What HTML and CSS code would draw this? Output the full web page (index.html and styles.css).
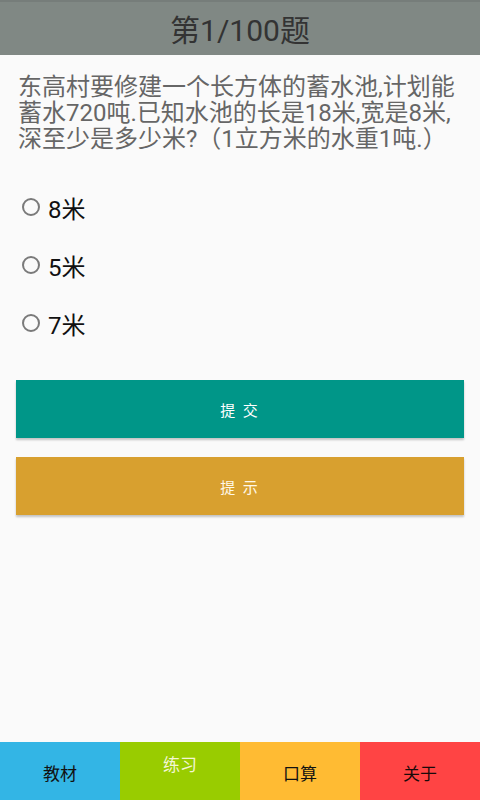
FILE: index.html
```html
<!DOCTYPE html>
<html lang="zh-CN">
<head>
<meta charset="utf-8">
<title>第1/100题</title>
<link rel="stylesheet" href="styles.css">
</head>
<body>
<div class="app">
  <header class="title-bar">第1/100题</header>
  <main class="content">
    <p class="question">东高村要修建一个长方体的蓄水池,计划能蓄水720吨.已知水池的长是18米,宽是8米,深至少是多少米?（1立方米的水重1吨.）</p>
    <ul class="options">
      <li class="option"><span class="radio"></span><span class="opt-text">8米</span></li>
      <li class="option"><span class="radio"></span><span class="opt-text">5米</span></li>
      <li class="option"><span class="radio"></span><span class="opt-text">7米</span></li>
    </ul>
    <div class="btn btn-submit">提 交</div>
    <div class="btn btn-hint">提 示</div>
  </main>
  <nav class="tabs">
    <div class="tab tab-book">教材</div>
    <div class="tab tab-practice">练习</div>
    <div class="tab tab-oral">口算</div>
    <div class="tab tab-about">关于</div>
  </nav>
</div>
</body>
</html>
```

FILE: styles.css
```css
html, body {
  margin: 0;
  padding: 0;
}
body {
  background: #fafafa;
  font-family: Roboto, "Noto Sans CJK SC", sans-serif;
}
.app {
  width: 480px;
  height: 800px;
  display: flex;
  flex-direction: column;
  overflow: hidden;
}
.title-bar {
  height: 55px;
  flex: 0 0 55px;
  background: #808884;
  color: #333333;
  font-size: 30px;
  display: flex;
  align-items: center;
  justify-content: center;
  box-sizing: border-box;
  border-top: 2px solid #767d7a;
  padding-bottom: 2px;
}
.content {
  flex: 1 1 auto;
  display: flex;
  flex-direction: column;
  padding: 0 16px;
}
.question {
  margin: 19px 0 0 2px;
  font-size: 24px;
  line-height: 26px;
  color: #666666;
  width: 446px;
}
.options {
  list-style: none;
  margin: 26px 0 0 0;
  padding: 0;
}
.option {
  height: 58px;
  display: flex;
  align-items: center;
  padding-left: 6px;
}
.radio {
  width: 14px;
  height: 14px;
  border: 2px solid #7a7a7a;
  border-radius: 50%;
  margin-right: 8px;
  flex: 0 0 auto;
}
.opt-text {
  font-size: 24px;
  color: #111111;
}
.btn {
  height: 58px;
  display: flex;
  align-items: center;
  justify-content: center;
  color: #ffffff;
  font-size: 15px;
  letter-spacing: 2px;
  box-shadow: 0 2px 2px rgba(0, 0, 0, 0.22);
}
.btn-submit {
  margin-top: 28px;
  background: #009688;
}
.btn-hint {
  margin-top: 19px;
  background: #d8a02f;
  color: #fff8e8;
}
.tabs {
  flex: 0 0 58px;
  height: 58px;
  display: grid;
  grid-template-columns: repeat(4, 1fr);
}
.tab {
  display: flex;
  align-items: center;
  justify-content: center;
  font-size: 17px;
  color: #111111;
  padding-top: 2px;
}
.tab-book { background: #33b5e5; }
.tab-practice {
  background: #99cc00;
  color: #f3f6d6;
  align-items: flex-start;
  padding-top: 9px;
}
.tab-oral { background: #ffbb33; }
.tab-about { background: #ff4444; color: #1a0a0a; }
```
